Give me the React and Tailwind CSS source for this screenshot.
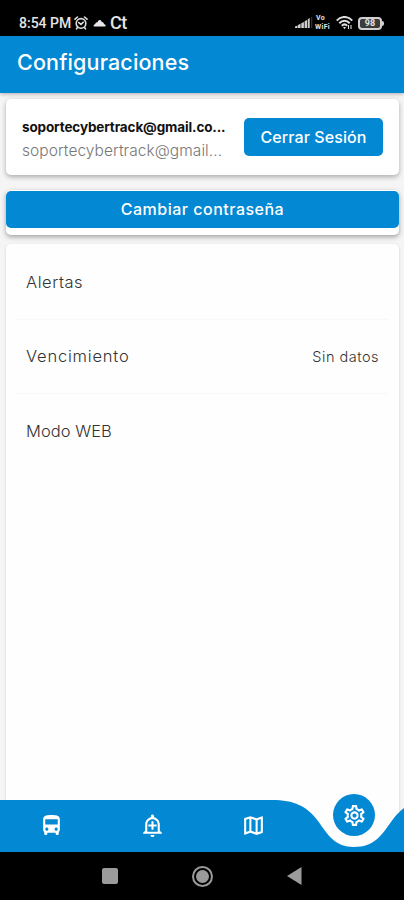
import React from 'react';
import { MdDirectionsBus, MdOutlineAddAlert, MdOutlineMap, MdOutlineSettings } from 'react-icons/md';

const rows = [
  { id: 1, label: 'Alertas', spacing: 'tracking-[0.55px]' },
  { id: 2, label: 'Vencimiento', value: 'Sin datos', spacing: 'tracking-[0.8px]' },
  { id: 3, label: 'Modo WEB', spacing: 'tracking-[0.05px]' },
];

function AlarmIcon() {
  return (
    <svg width="14" height="14" viewBox="0 0 14 14" fill="none" stroke="#dedede" strokeWidth="1.6" strokeLinecap="round">
      <circle cx="7" cy="7.4" r="4.8" />
      <path d="M1 3.2 3.5 1M13 3.2 10.5 1M4.8 6.6 7 8.4 9.2 6.2M3.6 11.4 2.5 12.8M10.4 11.4 11.5 12.8" />
    </svg>
  );
}

function StatusBar() {
  return (
    <div className="flex h-9 shrink-0 items-center justify-between bg-black pl-[19px] pr-5 pt-[10px] text-[#e4e4e4]">
      <div className="flex items-center">
        <span className="w-[53px] whitespace-nowrap font-['Roboto',sans-serif] text-[14px] font-medium leading-none">8:54 PM</span>
        <span className="ml-[2px]"><AlarmIcon /></span>
        <svg className="ml-[5px]" width="13" height="8" viewBox="0 0 13 8" fill="#e8e8e8">
          <path d="M1.8 7.5C.2 7.5.2 5.3 2 5.2 2.7 3.4 3.7 3.1 4.5 3.2 5.7.3 8.2.6 8.8 3.1c1.3-.1 2 .8 2.2 2.1 2.2 0 2.1 2.3.4 2.3Z" />
        </svg>
        <span className="ml-1 font-['Roboto',sans-serif] text-[18px] font-medium leading-none tracking-[-0.5px]">Ct</span>
      </div>
      <div className="flex items-center">
        <svg width="18" height="12" viewBox="0 0 18 12" fill="#cfcfcf">
          <path d="M0 9.5 2.5 8.5V11H0ZM3 8 5.6 6.8V11H3ZM6.3 6.2 8.9 5V11H6.3ZM9.6 4.2 12 3V11H9.6ZM12.7 2.2 14.7 1v10h-2Z" />
          <path d="M16.4 0h.8v11h-.8Z" opacity=".4" />
        </svg>
        <div className="ml-[2px] flex w-[17px] flex-col font-['Roboto',sans-serif] text-[7px] font-bold leading-[9px] tracking-[0.35px]">
          <span className="pl-px">Vo</span>
          <span>WiFi</span>
        </div>
        <svg className="ml-[4px]" width="17" height="14" viewBox="0 0 17 14" fill="none" stroke="#dedede" strokeWidth="2.1">
          <path d="M.8 4.6C5-.2 12-.2 16.2 4.6M3.3 7.2C6.3 4 10.7 4 13.7 7.2M5.8 9.7c1.7-1.6 3.7-1.6 5.4 0" />
          <path d="M7 11h3l-1.5 2.2Z" fill="#dedede" stroke="none" />
          <path d="M12.5 9v4M15 9v4" strokeWidth="1.1" />
        </svg>
        <div className="ml-[5px] flex items-center">
          <div className="flex h-[13px] w-6 items-center justify-center rounded-[4px] border-2 border-[#d0d0d0] bg-[#3b3b3b]">
            <span className="font-['Roboto',sans-serif] text-[9px] font-bold leading-none">98</span>
          </div>
          <div className="h-[5px] w-[2px] rounded-r bg-[#d0d0d0]" />
        </div>
      </div>
    </div>
  );
}

function TabBar() {
  return (
    <div className="relative h-[58px] shrink-0">
      <svg className="absolute inset-0" width="404" height="58" viewBox="0 0 404 58">
        <path d="M0 6H272C294 6 307 12 318 27C328 41 335 53 354 53C374 53 381 42 391 28C396 21 400 17 404 14V58H0Z" fill="#0388d3" />
      </svg>
      <div className="absolute inset-x-0 top-0 flex h-full pt-[19px] text-white">
        <div className="flex w-[102px] justify-center"><MdDirectionsBus size={25} /></div>
        <div className="flex w-[100px] justify-center"><MdOutlineAddAlert size={25} /></div>
        <div className="flex w-[102px] justify-center"><MdOutlineMap size={25} /></div>
      </div>
      <div className="absolute left-[333px] top-0 flex h-[42px] w-[42px] items-center justify-center rounded-full bg-[#0388d3] text-white">
        <MdOutlineSettings size={25} />
      </div>
    </div>
  );
}

export default function App() {
  return (
    <div className="flex h-[900px] w-[404px] flex-col overflow-hidden bg-[#f5f5f6] font-['Inter',sans-serif]">
      <StatusBar />
      <header className="z-10 flex h-[57px] shrink-0 items-center bg-[#0388d3] pb-[5px] pl-[17px] shadow-[0_1px_4px_rgba(0,0,0,0.3)]">
        <h1 className="text-[21.5px] font-medium tracking-[0.15px] text-white">Configuraciones</h1>
      </header>

      <main className="flex min-h-0 flex-1 flex-col pl-[6px] pr-[5px] pt-[6px]">
        <div className="flex h-[76px] shrink-0 items-center justify-between rounded-[5px] bg-white pl-[16px] pr-4 shadow-[0_2px_5px_rgba(0,0,0,0.3)]">
          <div className="whitespace-nowrap pt-[3px]">
            <p className="text-[13.5px] font-bold leading-[23px] tracking-[-0.13px] text-[#111]">soportecybertrack@gmail.co...</p>
            <p className="text-[15.5px] font-light leading-[23px] tracking-[0.06px] text-[#777]">soportecybertrack@gmail...</p>
          </div>
          <button className="h-[38px] w-[139px] rounded-[5px] bg-[#0388d3] text-[16px] font-medium tracking-[0.1px] text-white">Cerrar Sesión</button>
        </div>

        <div className="mt-[15px] h-[45px] shrink-0 rounded-[5px] bg-white pt-px shadow-[0_2px_5px_rgba(0,0,0,0.35)]">
          <button className="h-[37px] w-full rounded-[5px] bg-[#0388d3] pb-[2px] text-[16px] font-medium tracking-[0.5px] text-white">Cambiar contraseña</button>
        </div>

        <div className="-mb-[58px] mt-[9px] flex-1 rounded-t-[5px] bg-[#fefefe] px-[10px] shadow-[0_1px_3px_rgba(0,0,0,0.15)]">
          {rows.map((row) => (
            <div key={row.id} className="flex h-[76px] items-center justify-between border-b border-[#f8f8f8] px-[10px] pt-px text-[#333] last:border-0 [&:not(:first-child)]:h-[74px] [&:not(:first-child)]:pt-0">
              <span className={`text-[16.5px] font-light ${row.spacing}`}>{row.label}</span>
              {row.value && <span className="text-[14.5px] font-light tracking-[0.5px]">{row.value}</span>}
            </div>
          ))}
        </div>
      </main>

      <TabBar />

      <div className="flex h-12 shrink-0 items-center bg-black pl-[102px]">
        <div className="h-4 w-4 rounded-[2px] bg-[#9b9b9b]" />
        <div className="ml-[74px] flex h-[21px] w-[21px] items-center justify-center rounded-full border-2 border-[#9b9b9b]">
          <div className="h-[13px] w-[13px] rounded-full bg-[#9b9b9b]" />
        </div>
        <svg className="ml-[74px]" width="15" height="18" viewBox="0 0 15 18" fill="#9b9b9b"><path d="M0 9 14.5 0v18Z" /></svg>
      </div>
    </div>
  );
}
